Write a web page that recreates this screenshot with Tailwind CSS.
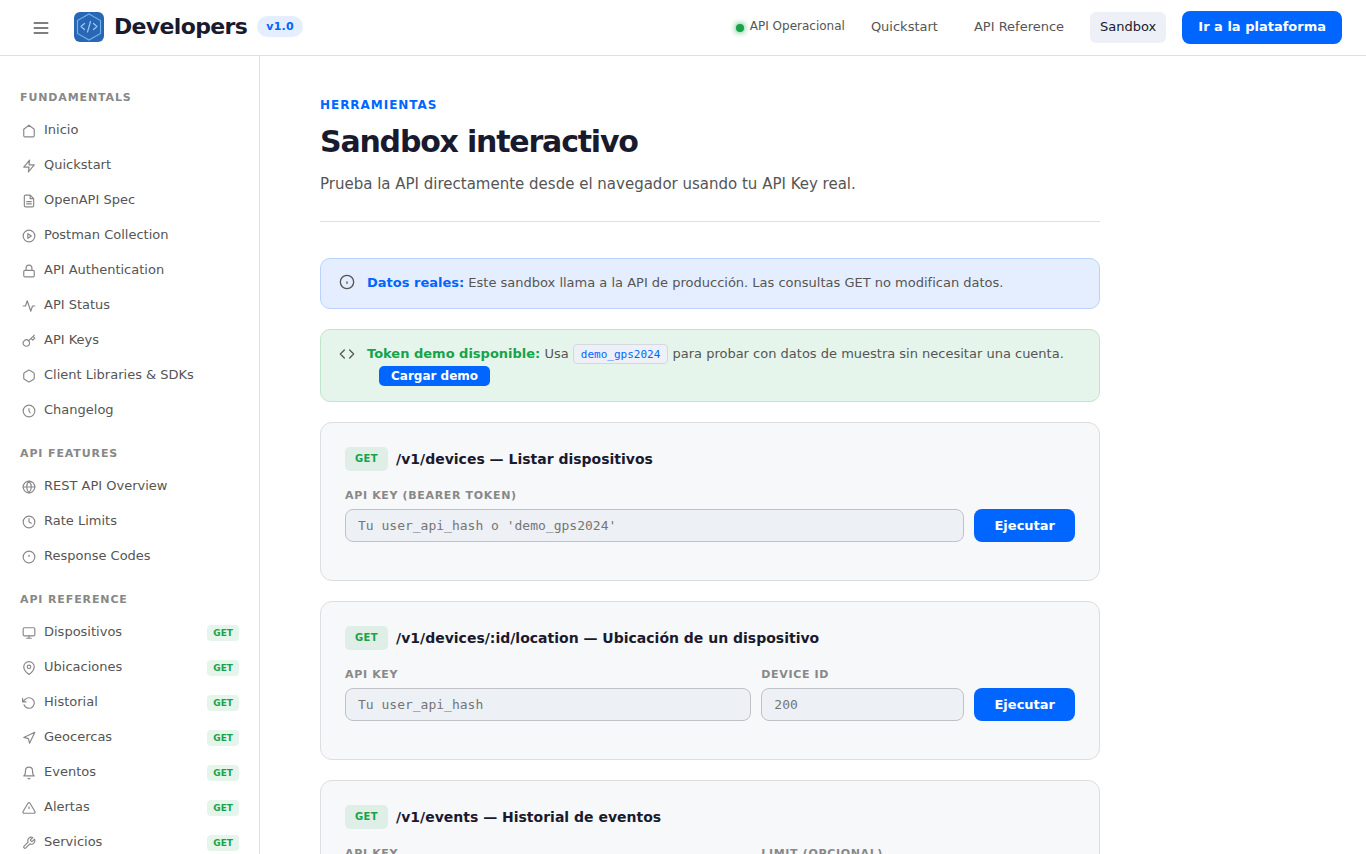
<!DOCTYPE html>
<html lang="es">
<head>
<meta charset="utf-8">
<meta name="viewport" content="width=device-width, initial-scale=1">
<title>Developers – Sandbox</title>
<script src="https://cdn.jsdelivr.net/npm/@tailwindcss/browser@4"></script>
</head>
<body class="flex h-screen flex-col overflow-hidden bg-white font-['DejaVu_Sans',sans-serif] text-[#1a1a2e]">
<header class="flex h-14 shrink-0 items-center justify-between border-b border-[#e0e0e0] px-6">
  <div class="flex items-center">
    <button type="button" aria-label="Menú" class="mr-4 flex size-[34px] items-center justify-center text-[#555]">
      <svg class="size-5" viewBox="0 0 24 24" fill="none" stroke="currentColor" stroke-width="2" stroke-linecap="round"><path d="M4 6h16M4 12h16M4 18h16"/></svg>
    </button>
    <a href="#" class="flex items-center gap-2.5 pb-0.5">
      <svg class="size-[30px]" viewBox="0 0 30 30" fill="none"><rect width="30" height="30" rx="6" fill="#2a66b5"/><path d="M15 2l11.500 6.500v13L15 28 3.500 21.500v-13z" stroke="#6ab7ea" stroke-width="1.100"/><path d="M10.500 11.500L7 14.500l3.500 3M19.500 11.500l3.500 3-3.500 3M16.500 9.500l-3 10.500" stroke="#8fd0f5" stroke-width="1.200" stroke-linecap="round" stroke-linejoin="round"/></svg>
      <span class="text-[22px] leading-7 font-bold tracking-[-0.03em]">Developers</span>
      <span class="rounded-full bg-[#e5eeff] px-[9px] text-[11px] leading-[21px] font-bold tracking-[0.03em] text-[#0066ff]">v1.0</span>
    </a>
  </div>
  <nav class="flex items-center text-[13px] leading-[21px] text-[#555]">
    <span class="mr-4 flex items-center gap-1.5 text-xs leading-[21px]"><span class="size-2 rounded-full bg-[#16a34a] shadow-[0_0_6px_#16a34a]"></span><span class="pb-0.5">API Operacional</span></span>
    <a href="#" class="mr-4 rounded-md px-2.5 pt-1 pb-1.5">Quickstart</a>
    <a href="#" class="mr-4 rounded-md px-2.5 pt-1 pb-1.5">API Reference</a>
    <a href="#" class="mr-4 rounded-md bg-[#edf0f6] px-2.5 pt-1 pb-1.5 text-[#1a1a2e]">Sandbox</a>
    <a href="#" class="rounded-lg bg-[#0066ff] px-4 pt-[5px] pb-[7px] font-bold text-white">Ir a la plataforma</a>
  </nav>
</header>
<div class="flex min-h-0 flex-1">
  <aside class="w-[260px] shrink-0 overflow-y-auto border-r border-[#e0e0e0] pt-[33px] text-[13px] leading-[21px] text-[#555] [scrollbar-width:none] [&_a]:flex [&_a]:items-center [&_a]:gap-2 [&_a]:px-5 [&_a]:py-[7px] [&_b]:mt-0.5 [&_b]:ml-auto [&_b]:rounded [&_b]:bg-[#e6f5eb] [&_b]:px-1.5 [&_b]:text-[9px] [&_b]:leading-4 [&_b]:text-[#16a34a] [&_h2]:px-5 [&_h2]:pb-[5px] [&_h2]:text-[11px] [&_h2]:leading-[18px] [&_h2]:font-bold [&_h2]:tracking-[0.08em] [&_h2]:text-[#888] [&_svg]:mt-0.5 [&_svg]:ml-0.5 [&_svg]:size-[14px] [&_svg]:fill-none [&_svg]:stroke-[#888] [&_svg]:stroke-2 [&_svg]:[stroke-linecap:round] [&_svg]:[stroke-linejoin:round]">
    <nav aria-label="Documentación">
      <h2>FUNDAMENTALS</h2>
      <a href="#"><svg viewBox="0 0 24 24"><path d="M3 9l9-7 9 7v11a2 2 0 0 1-2 2H5a2 2 0 0 1-2-2z"/></svg>Inicio</a>
      <a href="#"><svg viewBox="0 0 24 24"><path d="M13 2L3 14h9l-1 8 10-12h-9z"/></svg>Quickstart</a>
      <a href="#"><svg viewBox="0 0 24 24"><path d="M14 2H6a2 2 0 0 0-2 2v16a2 2 0 0 0 2 2h12a2 2 0 0 0 2-2V8zM14 2v6h6M16 13H8M16 17H8"/></svg>OpenAPI Spec</a>
      <a href="#"><svg viewBox="0 0 24 24"><circle cx="12" cy="12" r="10"/><path d="M10 8l6 4-6 4z"/></svg>Postman Collection</a>
      <a href="#"><svg viewBox="0 0 24 24"><rect x="3" y="11" width="18" height="11" rx="2"/><path d="M7 11V7a5 5 0 0 1 10 0v4"/></svg>API Authentication</a>
      <a href="#"><svg viewBox="0 0 24 24"><path d="M22 12h-4l-3 9L9 3l-3 9H2"/></svg>API Status</a>
      <a href="#"><svg viewBox="0 0 24 24"><path d="M21 2l-2 2m-7.610 7.610a5.500 5.500 0 1 1-7.778 7.778 5.500 5.500 0 0 1 7.777-7.777zm0 0L15.500 7.500m0 0l3 3L22 7l-3-3m-3.500 3.500L19 4"/></svg>API Keys</a>
      <a href="#"><svg viewBox="0 0 24 24"><path d="M21 16V8a2 2 0 0 0-1-1.730l-7-4a2 2 0 0 0-2 0l-7 4A2 2 0 0 0 3 8v8a2 2 0 0 0 1 1.730l7 4a2 2 0 0 0 2 0l7-4A2 2 0 0 0 21 16z"/></svg>Client Libraries &amp; SDKs</a>
      <a href="#"><svg viewBox="0 0 24 24"><circle cx="12" cy="12" r="10"/><path d="M12 8v4l2 3"/></svg>Changelog</a>
      <h2 class="mt-[18px]">API FEATURES</h2>
      <a href="#"><svg viewBox="0 0 24 24"><circle cx="12" cy="12" r="10"/><path d="M2 12h20M12 2a15.300 15.300 0 0 1 4 10 15.300 15.300 0 0 1-4 10 15.300 15.300 0 0 1-4-10 15.300 15.300 0 0 1 4-10z"/></svg>REST API Overview</a>
      <a href="#"><svg viewBox="0 0 24 24"><circle cx="12" cy="12" r="10"/><path d="M12 6v6l4 2"/></svg>Rate Limits</a>
      <a href="#"><svg viewBox="0 0 24 24"><circle cx="12" cy="12" r="10"/><path d="M12 9v2"/></svg>Response Codes</a>
      <h2 class="mt-[18px]">API REFERENCE</h2>
      <a href="#"><svg viewBox="0 0 24 24"><rect x="2" y="3" width="20" height="14" rx="2"/><path d="M8 21h8M12 17v4"/></svg>Dispositivos<b>GET</b></a>
      <a href="#"><svg viewBox="0 0 24 24"><path d="M21 10c0 7-9 13-9 13s-9-6-9-13a9 9 0 0 1 18 0z"/><circle cx="12" cy="10" r="3"/></svg>Ubicaciones<b>GET</b></a>
      <a href="#"><svg viewBox="0 0 24 24"><path d="M1 4v6h6M3.510 15a9 9 0 1 0 2.130-9.360L1 10"/></svg>Historial<b>GET</b></a>
      <a href="#"><svg viewBox="0 0 24 24"><path d="M3 11l19-9-9 19-2-8z"/></svg>Geocercas<b>GET</b></a>
      <a href="#"><svg viewBox="0 0 24 24"><path d="M18 8A6 6 0 0 0 6 8c0 7-3 9-3 9h18s-3-2-3-9M13.730 21a2 2 0 0 1-3.460 0"/></svg>Eventos<b>GET</b></a>
      <a href="#"><svg viewBox="0 0 24 24"><path d="M10.290 3.860L1.820 18a2 2 0 0 0 1.710 3h16.940a2 2 0 0 0 1.710-3L13.710 3.860a2 2 0 0 0-3.420 0zM12 10v3"/></svg>Alertas<b>GET</b></a>
      <a href="#"><svg viewBox="0 0 24 24"><path d="M14.700 6.300a1 1 0 0 0 0 1.400l1.600 1.600a1 1 0 0 0 1.400 0l3.770-3.770a6 6 0 0 1-7.940 7.940l-6.910 6.910a2.120 2.120 0 0 1-3-3l6.910-6.910a6 6 0 0 1 7.940-7.940l-3.760 3.760z"/></svg>Servicios<b>GET</b></a>
    </nav>
  </aside>
  <main class="min-w-0 flex-1 overflow-y-auto [scrollbar-width:none]">
    <div class="max-w-[900px] px-[60px] pt-10 pb-5">
      <div class="border-b border-[#e0e0e0] pb-[25px]">
        <p class="text-xs leading-[19px] font-bold tracking-[0.08em] text-[#0066ff]">HERRAMIENTAS</p>
        <h1 class="mt-2 text-[30px] leading-[38px] font-bold tracking-[-0.04em]">Sandbox interactivo</h1>
        <p class="mt-[11px] text-[15px] leading-6 text-[#555]">Prueba la API directamente desde el navegador usando tu API Key real.</p>
      </div>
      <div class="mt-9 flex gap-3 rounded-[10px] border border-[#b8d3ff] bg-[#e5eeff] px-[18px] pt-[13px] pb-[15px] text-[13px] leading-[21px] text-[#555]">
        <svg class="mt-0.5 size-4 shrink-0" viewBox="0 0 24 24" fill="none" stroke="currentColor" stroke-width="2" stroke-linecap="round"><circle cx="12" cy="12" r="10"/><path d="M12 12v2"/></svg>
        <p><strong class="text-[#0066ff]">Datos reales:</strong> Este sandbox llama a la API de producción. Las consultas GET no modifican datos.</p>
      </div>
      <div class="mt-5 flex gap-3 rounded-[10px] border border-[#bfe6cb] bg-[#e6f5eb] px-[18px] pt-[13px] pb-[15px] text-[13px] leading-[21px] text-[#555]">
        <svg class="mt-[3px] size-4 shrink-0" viewBox="0 0 24 24" fill="none" stroke="currentColor" stroke-width="2" stroke-linecap="round" stroke-linejoin="round"><path d="M16 18l6-6-6-6M8 6l-6 6 6 6"/></svg>
        <p><strong class="text-[#16a34a]">Token demo disponible:</strong> Usa <code class="rounded border border-[#d5d8e0] bg-[#edf0f7] px-[7px] pt-[3px] pb-0.5 font-['DejaVu_Sans_Mono',monospace] text-[11px] text-[#0066ff]">demo_gps2024</code> para probar con datos de muestra sin necesitar una cuenta. <button type="button" class="mt-px ml-3 rounded-[5px] bg-[#0066ff] px-3 align-top text-xs leading-5 font-bold text-white">Cargar demo</button></p>
      </div>

      <section class="mt-5 rounded-xl border border-[#dcdde1] bg-[#f7f8fa] p-6">
        <h3 class="flex items-center gap-2 text-sm font-bold"><span class="rounded-[5px] bg-[#dfeee6] px-2.5 text-[10px] leading-6 tracking-[0.04em] text-[#16a34a]">GET</span>/v1/devices — Listar dispositivos</h3>
        <form class="mt-4 mb-3.5 flex items-end gap-2.5">
          <div class="flex min-w-0 flex-1 flex-col gap-[5px]">
            <label for="k1" class="text-[11px] leading-[17px] font-bold tracking-[0.06em] text-[#888]">API KEY (BEARER TOKEN)</label>
            <input id="k1" type="text" placeholder="Tu user_api_hash o 'demo_gps2024'" class="h-[33px] w-full rounded-lg border border-[#c0c2c8] bg-[#edf0f5] px-3 font-['DejaVu_Sans_Mono',monospace] text-[13px] placeholder:text-[#757575]">
          </div>
          <button type="button" class="h-[33px] rounded-lg bg-[#0066ff] px-5 text-[13px] font-bold text-white">Ejecutar</button>
        </form>
      </section>

      <section class="mt-5 rounded-xl border border-[#dcdde1] bg-[#f7f8fa] p-6">
        <h3 class="flex items-center gap-2 text-sm font-bold"><span class="rounded-[5px] bg-[#dfeee6] px-2.5 text-[10px] leading-6 tracking-[0.04em] text-[#16a34a]">GET</span>/v1/devices/:id/location — Ubicación de un dispositivo</h3>
        <form class="mt-4 mb-3.5 flex items-end gap-2.5">
          <div class="grid min-w-0 flex-1 grid-cols-[2fr_1fr] gap-2.5">
            <div class="flex min-w-0 flex-col gap-[5px]">
              <label for="k2" class="text-[11px] leading-[17px] font-bold tracking-[0.06em] text-[#888]">API KEY</label>
              <input id="k2" type="text" placeholder="Tu user_api_hash" class="h-[33px] w-full rounded-lg border border-[#c0c2c8] bg-[#edf0f5] px-3 font-['DejaVu_Sans_Mono',monospace] text-[13px] placeholder:text-[#757575]">
            </div>
            <div class="flex min-w-0 flex-col gap-[5px]">
              <label for="d2" class="text-[11px] leading-[17px] font-bold tracking-[0.06em] text-[#888]">DEVICE ID</label>
              <input id="d2" type="text" placeholder="200" class="h-[33px] w-full rounded-lg border border-[#c0c2c8] bg-[#edf0f5] px-3 font-['DejaVu_Sans_Mono',monospace] text-[13px] placeholder:text-[#757575]">
            </div>
          </div>
          <button type="button" class="h-[33px] rounded-lg bg-[#0066ff] px-5 text-[13px] font-bold text-white">Ejecutar</button>
        </form>
      </section>

      <section class="mt-5 rounded-xl border border-[#dcdde1] bg-[#f7f8fa] p-6">
        <h3 class="flex items-center gap-2 text-sm font-bold"><span class="rounded-[5px] bg-[#dfeee6] px-2.5 text-[10px] leading-6 tracking-[0.04em] text-[#16a34a]">GET</span>/v1/events — Historial de eventos</h3>
        <form class="mt-4 mb-3.5 flex items-end gap-2.5">
          <div class="grid min-w-0 flex-1 grid-cols-[2fr_1fr] gap-2.5">
            <div class="flex min-w-0 flex-col gap-[5px]">
              <label for="k3" class="text-[11px] leading-[17px] font-bold tracking-[0.06em] text-[#888]">API KEY</label>
              <input id="k3" type="text" placeholder="Tu user_api_hash" class="h-[33px] w-full rounded-lg border border-[#c0c2c8] bg-[#edf0f5] px-3 font-['DejaVu_Sans_Mono',monospace] text-[13px] placeholder:text-[#757575]">
            </div>
            <div class="flex min-w-0 flex-col gap-[5px]">
              <label for="d3" class="text-[11px] leading-[17px] font-bold tracking-[0.06em] text-[#888]">LIMIT (OPCIONAL)</label>
              <input id="d3" type="text" placeholder="50" class="h-[33px] w-full rounded-lg border border-[#c0c2c8] bg-[#edf0f5] px-3 font-['DejaVu_Sans_Mono',monospace] text-[13px] placeholder:text-[#757575]">
            </div>
          </div>
          <button type="button" class="h-[33px] rounded-lg bg-[#0066ff] px-5 text-[13px] font-bold text-white">Ejecutar</button>
        </form>
      </section>
    </div>
  </main>
</div>
</body>
</html>
